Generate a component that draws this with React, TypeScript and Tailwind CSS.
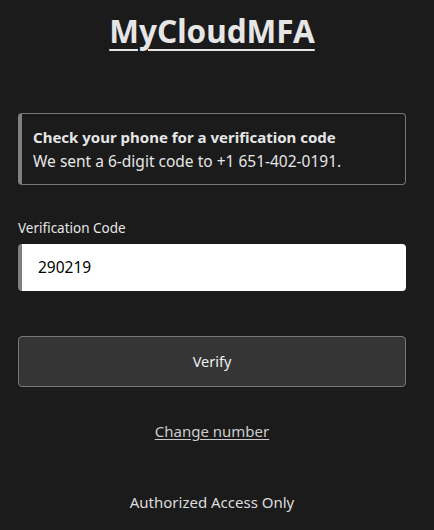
import React from "react";

const App: React.FC = () => {
  return (
    <div
      className="min-h-[530px] w-full bg-[#1b1b1b] pl-[18px] pr-[28px] text-[#e6e6e6]"
      style={{ fontFamily: '"Noto Sans", "Open Sans", sans-serif' }}
    >
      <h1 className="pt-[9px] text-center text-[31.5px] font-bold leading-[44px]">
        <span className="underline decoration-[1.5px] underline-offset-[6px]">MyCloudMFA</span>
      </h1>

      <div className="mt-[60px] rounded border border-l-4 border-[#777] border-l-[#808080] px-[11px] py-[13px]">
        <p className="text-[15px] font-bold leading-[20px]">
          Check your phone for a verification code
        </p>
        <p className="mt-[4px] text-[15.5px] leading-[20px]">
          We sent a 6-digit code to +1 651-402-0191.
        </p>
      </div>

      <label className="mt-[34px] block text-[13.5px] leading-[18px]">Verification Code</label>
      <div className="mt-[7px] flex h-[47px] items-center rounded border-l-4 border-[#808080] bg-white px-[16px] text-[15.5px] text-black">
        290219
      </div>

      <button className="mt-[45px] flex h-[51px] w-full items-center justify-center rounded border border-[#777] bg-[#353535] text-[14.5px] text-[#eee]">
        Verify
      </button>

      <div className="mt-[33px] text-center text-[15px] text-[#ccc]">
        <span className="underline underline-offset-2">Change number</span>
      </div>

      <p className="mt-[48px] text-center text-[15px] text-[#ddd]">Authorized Access Only</p>
    </div>
  );
};

export default App;
